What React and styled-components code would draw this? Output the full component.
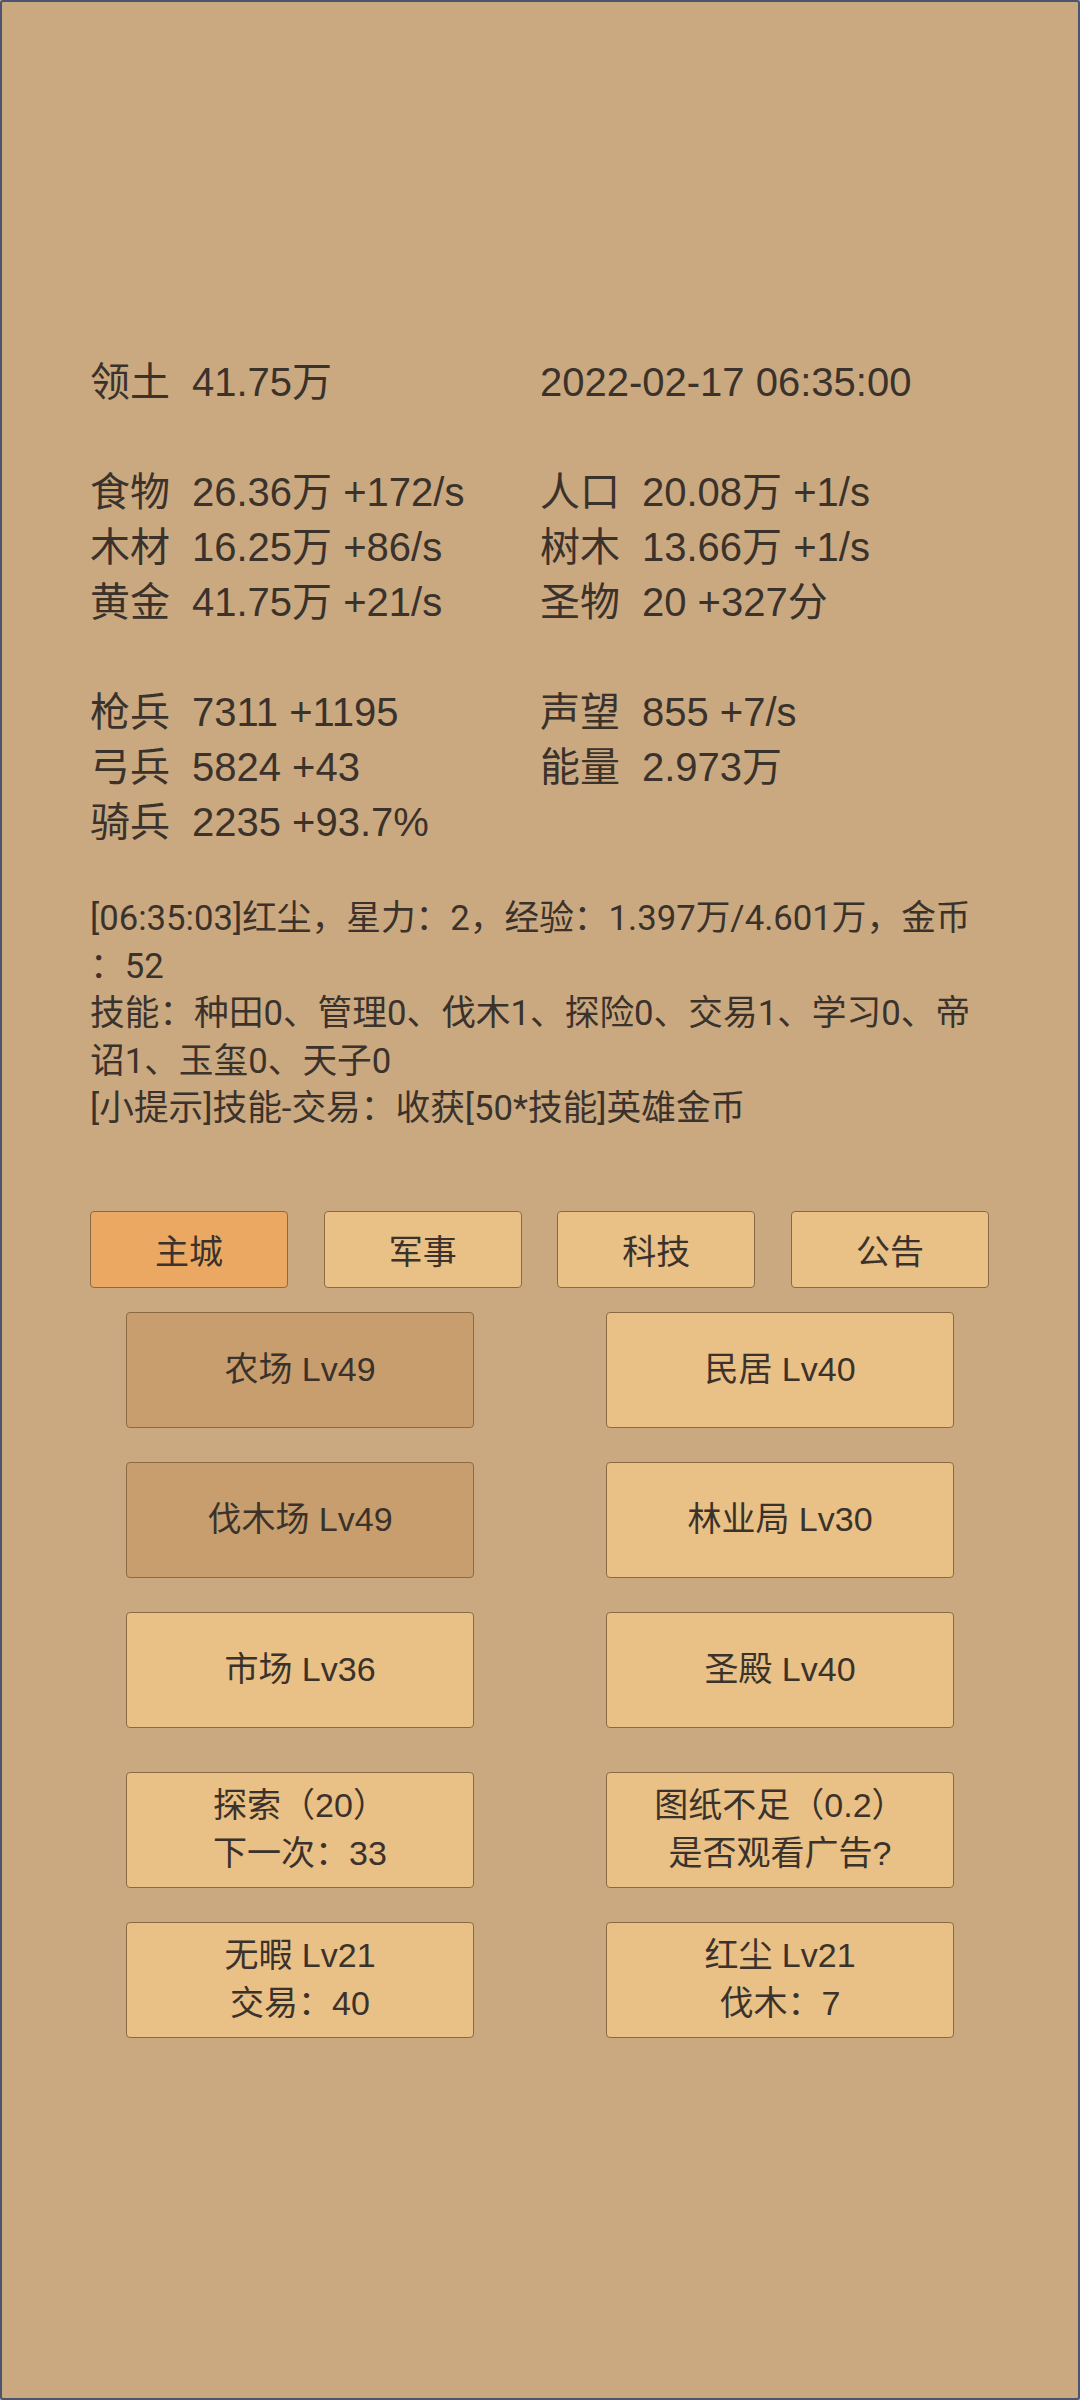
import styled, { createGlobalStyle } from 'styled-components';

const GlobalStyle = createGlobalStyle`
    html, body {
        margin: 0;
        padding: 0;
        background: #caa981;
    }
    * { box-sizing: border-box; }
`

const stats = [
    [['领土', '41.75万'], [null, '2022-02-17 06:35:00']],
    null,
    [['食物', '26.36万 +172/s'], ['人口', '20.08万 +1/s']],
    [['木材', '16.25万 +86/s'], ['树木', '13.66万 +1/s']],
    [['黄金', '41.75万 +21/s'], ['圣物', '20 +327分']],
    null,
    [['枪兵', '7311 +1195'], ['声望', '855 +7/s']],
    [['弓兵', '5824 +43'], ['能量', '2.973万']],
    [['骑兵', '2235 +93.7%'], null],
]

const logLines = [
    '[06:35:03]红尘，星力：2，经验：1.397万/4.601万，金币',
    '：52',
    '技能：种田0、管理0、伐木1、探险0、交易1、学习0、帝',
    '诏1、玉玺0、天子0',
    '[小提示]技能-交易：收获[50*技能]英雄金币',
]

const tabs = ['主城', '军事', '科技', '公告']

const buildings = [
    { text: ['农场 Lv49'], dark: true },
    { text: ['民居 Lv40'] },
    { text: ['伐木场 Lv49'], dark: true },
    { text: ['林业局 Lv30'] },
    { text: ['市场 Lv36'] },
    { text: ['圣殿 Lv40'] },
]

const actions = [
    { text: ['探索（20）', '下一次：33'] },
    { text: ['图纸不足（0.2）', '是否观看广告?'] },
    { text: ['无暇 Lv21', '交易：40'] },
    { text: ['红尘 Lv21', '伐木：7'] },
]

function Cell({ item }) {
    if (!item) return <StatCell />
    const [label, value] = item
    return (
        <StatCell>
            {label && <Label>{label}</Label>}
            <span>{value}</span>
        </StatCell>
    )
}

function App() {
    return (
        <>
            <GlobalStyle />
            <Page>
                <Stats>
                    {stats.map((row, idx) => row
                        ? <StatRow key={idx}><Cell item={row[0]} /><Cell item={row[1]} /></StatRow>
                        : <StatRow key={idx} />
                    )}
                </Stats>

                <Log>
                    {logLines.map((l, idx) => <div key={idx}>{l}</div>)}
                </Log>

                <Tabs>
                    {tabs.map((t, idx) => <Tab key={t} $active={idx == 0}>{t}</Tab>)}
                </Tabs>

                <Grid>
                    {buildings.map((b, idx) => (
                        <Btn key={idx} $dark={b.dark}>
                            {b.text.map(t => <span key={t}>{t}</span>)}
                        </Btn>
                    ))}
                </Grid>

                <Grid $top={44}>
                    {actions.map((b, idx) => (
                        <Btn key={idx}>
                            {b.text.map(t => <span key={t}>{t}</span>)}
                        </Btn>
                    ))}
                </Grid>
            </Page>
        </>
    );
}

export default App;

const Page = styled.div`
    width: 1080px;
    height: 2400px;
    border: 2px solid #4c5471;
    border-radius: 3px;
    background: #caa981;
    padding: 353px 90px 0 88px;
    color: #3a322b;
    font-family: "Liberation Sans", "Noto Sans CJK SC", sans-serif;
`

const Stats = styled.div`
    display: flex;
    flex-direction: column;
    font-size: 40px;
`

const StatRow = styled.div`
    display: grid;
    grid-template-columns: 450px 1fr;
    height: 55px;
    line-height: 55px;
`

const StatCell = styled.div`
    display: flex;
    white-space: nowrap;
`

const Label = styled.span`
    width: 80px;
    margin-right: 22px;
`

const Log = styled.div`
    margin-top: 45px;
    font-family: Roboto, "Noto Sans CJK SC", sans-serif;
    font-size: 34.7px;
    line-height: 47.6px;
    white-space: nowrap;
`

const Tabs = styled.div`
    display: grid;
    grid-template-columns: repeat(4, 198px);
    justify-content: space-between;
    margin-top: 78px;
    width: 899px;
`

const Tab = styled.div`
    height: 77px;
    display: flex;
    align-items: center;
    justify-content: center;
    border: 1.5px solid #8a6a45;
    border-radius: 4px;
    background: ${p => p.$active ? '#eba862' : '#e9c085'};
    font-size: 34px;
`

const Grid = styled.div`
    display: grid;
    grid-template-columns: repeat(2, 348px);
    column-gap: 132px;
    row-gap: 34px;
    padding-left: 36px;
    margin-top: ${p => p.$top || 24}px;
`

const Btn = styled.div`
    height: 116px;
    display: flex;
    flex-direction: column;
    align-items: center;
    justify-content: center;
    border: 1.5px solid #8a6a45;
    border-radius: 4px;
    background: ${p => p.$dark ? '#c89e6e' : '#e9c085'};
    font-size: 34px;
    line-height: 47.6px;
    white-space: nowrap;
`
